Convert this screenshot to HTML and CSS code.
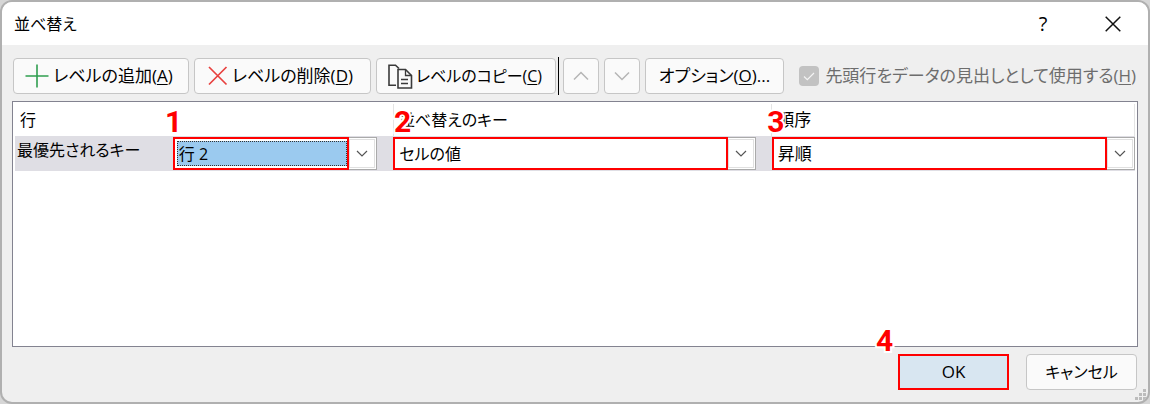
FILE: index.html
```
<!DOCTYPE html>
<html lang="ja">
<head>
<meta charset="utf-8">
<title>並べ替え</title>
<link rel="stylesheet" href="styles.css">
</head>
<body>
<main class="dialog">
  <header class="titlebar">
    <h1 class="title">並べ替え</h1>
    <button class="caption help" aria-label="ヘルプ">?</button>
    <button class="caption" aria-label="閉じる"><svg width="16" height="16" viewBox="0 0 16 16"><path d="M.7 .7 15.3 15.3M15.3 .7.7 15.3" stroke="#111" stroke-width="1.5"/></svg></button>
  </header>
  <div class="toolbar">
    <button class="btn add"><svg width="24" height="24" viewBox="0 0 24 24"><path d="M12 .5v23M.5 12h23" stroke="#2f9e4f" stroke-width="1.6"/></svg><span>レベルの追加(<u>A</u>)</span></button>
    <button class="btn delete"><svg width="20" height="20" viewBox="0 0 20 20"><path d="M1 1l17.500 17.500M18.500 1L1 18.500" stroke="#e8413f" stroke-width="1.7"/></svg><span>レベルの削除(<u>D</u>)</span></button>
    <button class="btn copy"><svg width="25" height="25" viewBox="0 0 25 25" fill="none" stroke="#3a3a3a" stroke-width="1.6"><path d="M8 21.200H1V1.200H7.500L11 4.500"/><path d="M10 5.500h7.500l6 6v12.500H10z" fill="#fafafa"/><path d="M17.500 5.500v6h6M13 15.500h7M13 19.500h7" stroke-width="1.3"/></svg><span>レベルのコピー(<u>C</u>)</span></button>
    <span class="divider"></span>
    <button class="btn move" disabled aria-label="上へ移動"><svg width="16" height="10" viewBox="0 0 16 10"><path d="M1 8.500 8 1.500l7 7" fill="none" stroke="#b5b5b5" stroke-width="1.5"/></svg></button>
    <button class="btn move" disabled aria-label="下へ移動"><svg width="16" height="10" viewBox="0 0 16 10"><path d="M1 1.500 8 8.500l7-7" fill="none" stroke="#b5b5b5" stroke-width="1.5"/></svg></button>
    <button class="btn options">オプション(<u>O</u>)...</button>
    <label class="check"><input type="checkbox" checked disabled><svg class="tick" width="20" height="20" viewBox="0 0 20 20"><path d="M5 10.500l3.300 3.200L15 7" fill="none" stroke="#f4f4f4" stroke-width="1.2"/></svg><span>先頭行をデータの見出しとして使用する(<u>H</u>)</span></label>
  </div>
  <section class="list">
    <table class="levels">
      <colgroup><col class="c-label"><col class="c-row"><col class="c-key"><col class="c-order"></colgroup>
      <thead>
        <tr>
          <th colspan="2" scope="col">行<b class="num num-1">1</b></th>
          <th scope="col">並べ替えのキー<b class="num num-2">2</b></th>
          <th class="order" scope="col">順序<b class="num num-3">3</b></th>
        </tr>
      </thead>
      <tbody>
        <tr>
          <td><label class="level" for="row">最優先されるキー</label></td>
          <td class="gap"><div class="combo focused"><select id="row"><option>行 2</option></select><span class="mark"></span><span class="arrow"><svg width="12" height="8" viewBox="0 0 12 8"><path d="M1 1l5 5 5-5" fill="none" stroke="#555" stroke-width="1.200"/></svg></span></div></td>
          <td class="gap"><div class="combo"><select aria-label="並べ替えのキー"><option>セルの値</option></select><span class="mark"></span><span class="arrow"><svg width="12" height="8" viewBox="0 0 12 8"><path d="M1 1l5 5 5-5" fill="none" stroke="#555" stroke-width="1.200"/></svg></span></div></td>
          <td class="order"><div class="combo"><select aria-label="順序"><option>昇順</option></select><span class="mark"></span><span class="arrow"><svg width="12" height="8" viewBox="0 0 12 8"><path d="M1 1l5 5 5-5" fill="none" stroke="#555" stroke-width="1.200"/></svg></span></div></td>
        </tr>
      </tbody>
    </table>
  </section>
  <footer class="footer">
    <button class="btn ok">OK<b class="num num-4">4</b></button>
    <button class="btn cancel">キャンセル</button>
  </footer>
  <svg class="grip" width="12" height="12" viewBox="0 0 12 12" fill="#bcbcbc"><path d="M8 0h3v3H8zM4 4h3v3H4zM8 4h3v3H8zM0 8h3v3H0zM4 8h3v3H4zM8 8h3v3H8z"/></svg>
</main>
</body>
</html>
```
FILE: styles.css
```
* { box-sizing: border-box; }
body {
  margin: 0;
  height: 100vh;
  padding: 2px;
  display: flex;
  background: #d6d6d6;
  color: #000;
  font: 17px/24px "Open Sans", "Noto Sans CJK JP", sans-serif;
  font-feature-settings: "palt";
}
button, select {
  font: inherit;
  font-feature-settings: inherit;
  color: inherit;
}
svg { flex: none; }
u { text-underline-offset: 2px; text-decoration-thickness: 1px; }

.dialog {
  position: relative;
  flex: 1;
  display: flex;
  flex-direction: column;
  background: #efefef;
  border-radius: 10px;
  box-shadow: 0 0 0 2px #b0b0b0;
  overflow: hidden;
}
.titlebar {
  display: flex;
  align-items: center;
  height: 43px;
  padding: 0 12px;
  background: #fff;
}
.title { flex: 1; margin: 0; font-size: 16px; font-weight: 400; }
.caption {
  display: flex;
  align-items: center;
  justify-content: center;
  width: 46px;
  height: 32px;
  margin-left: 24px;
  padding: 0;
  border: 0;
  background: none;
}
.help { font-size: 20px; }

.toolbar {
  display: flex;
  align-items: center;
  padding: 12px 12px 6px 11px;
}
.btn {
  flex: none;
  display: flex;
  align-items: center;
  justify-content: center;
  height: 36px;
  padding: 0;
  border: 1px solid #c6c6c6;
  border-radius: 4px;
  background: #fafafa;
  white-space: nowrap;
}
.add, .delete { gap: 4px; margin-right: 5px; padding-right: 4px; }
.add { width: 176px; }
.delete { width: 177px; }
.copy { width: 180px; gap: 3px; margin-right: 2px; padding-right: 2px; font-size: 16px; }
.divider { flex: none; width: 1px; height: 38px; margin-right: 4px; background: #000; }
.move { width: 36px; margin-right: 5px; }
.options { width: 139px; }
.check {
  position: relative;
  display: flex;
  align-items: center;
  gap: 6px;
  margin-left: auto;
  color: #6d6d6d;
  white-space: nowrap;
}
.check input {
  appearance: none;
  width: 20px;
  height: 20px;
  margin: 0;
  border-radius: 4px;
  background: #c2c2c2;
}
.tick { position: absolute; left: 0; }

.list {
  flex: 1;
  margin: 0 10px;
  padding: 2px;
  border: 1px solid #838390;
  background: #fff;
}
.levels {
  width: 100%;
  border-collapse: collapse;
  table-layout: fixed;
  font-size: 16px;
}
.c-label { width: 14.1%; }
.c-row { width: 19.7%; }
.c-key { width: 33.8%; }
.c-order { width: 32.4%; }
th {
  position: relative;
  height: 32px;
  padding: 0 5px;
  border-right: 1px solid #e4e4e4;
  text-align: left;
  font-weight: 400;
}
.order { font-size: 17px; }
td { height: 35px; padding: 0; background: #dfdee4; }
.gap { padding-right: 16px; }
.level { display: block; padding: 0 2px 8px; white-space: nowrap; }
.combo {
  position: relative;
  display: grid;
  grid-template-columns: 1fr 28px;
  height: 33px;
  background: #fff;
}
.combo select {
  grid-area: 1 / 1 / 2 / 3;
  appearance: none;
  width: 100%;
  padding: 0 32px 0 5px;
  border: 1px solid #aaa;
  border-radius: 0;
  background: none;
  outline: none;
}
.mark {
  grid-area: 1 / 1;
  border: 2px solid #f00;
  pointer-events: none;
}
.arrow {
  grid-area: 1 / 2;
  display: flex;
  align-items: center;
  justify-content: center;
  margin: 2px 2px 2px 0;
  border: 1px solid #e0e0e0;
  pointer-events: none;
}
.focused::before {
  content: "";
  grid-area: 1 / 1;
  margin: 4px 2px 4px 4px;
  border: 1px dotted #333;
  background: #9bcaef;
}

.num {
  position: absolute;
  color: #f00;
  font: bold 30px/30px Roboto, sans-serif;
  -webkit-text-stroke: 4px #fff;
  paint-order: stroke fill;
}
.num-1 { left: 150px; top: 3px; }
.num-2 { left: 0; top: 3px; }
.num-3 { left: -5px; top: 3px; }
.num-4 { left: -24px; top: -30px; }

.footer {
  display: flex;
  justify-content: flex-end;
  gap: 17px;
  padding: 7px 11px 12px;
}
.footer .btn { width: 111px; }
.footer .cancel { font-size: 16px; }
.footer .ok {
  position: relative;
  border: 2px solid #f00;
  border-radius: 0;
  background: #d8e6f1;
}
.grip { position: absolute; right: 1px; bottom: 1px; }
```
